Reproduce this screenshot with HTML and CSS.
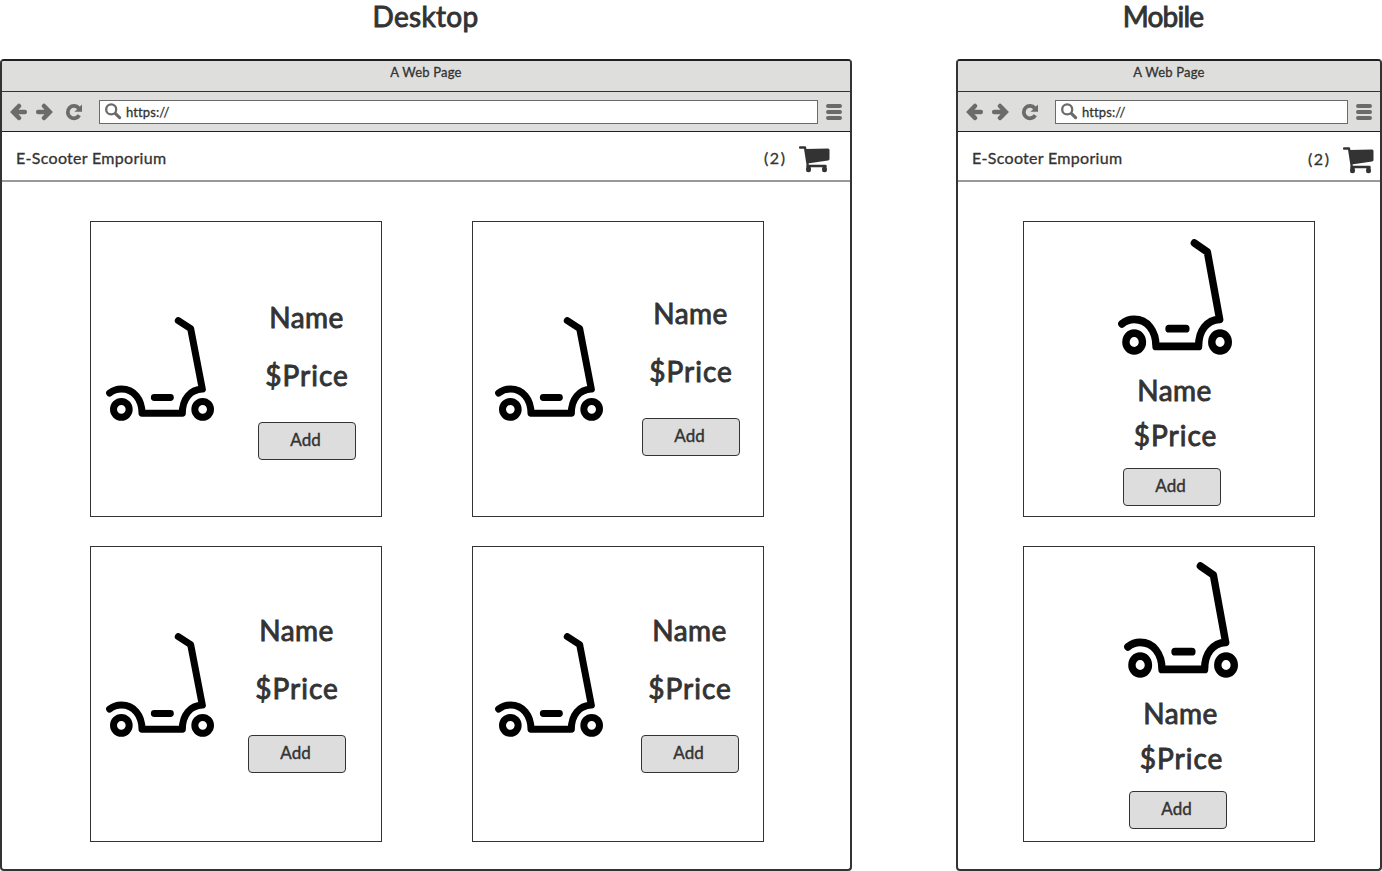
FILE: index.html
```html
<!DOCTYPE html>
<html lang="en">
<head>
<meta charset="utf-8">
<title>E-Scooter Emporium</title>
<link rel="stylesheet" href="styles.css">
</head>
<body>
<svg class="defs" width="0" height="0">
  <symbol id="scooter" viewBox="48 50 324 313" preserveAspectRatio="none">
    <g fill="none" stroke="#000" stroke-width="21" stroke-linecap="round" stroke-linejoin="round">
      <path d="M265 61 302 85 337 267C301 269 277 296 277 340H156C156 298 132 267 94 267C80 267 68 272 59 279M193 292H241"/>
      <ellipse cx="94" cy="328" rx="23.5" ry="24"/>
      <ellipse cx="338" cy="328" rx="23.500" ry="24"/>
    </g>
  </symbol>
  <symbol id="nav" viewBox="0 0 74 18">
    <g fill="none" stroke="#6b6b6b" stroke-width="4.500">
      <path d="M9 3 3.200 9 9 15M3.500 9H14.800M34 3 39.800 9 34 15M39.500 9H28.200" stroke-linecap="round"/>
      <path d="M69.300 12.300A6.200 6.200 0 1 1 68.800 5.200" stroke-width="3.800"/>
    </g>
    <path d="M72 1.500V8.700H64.500Z" fill="#6b6b6b"/>
  </symbol>
  <symbol id="search" viewBox="0 0 17 17">
    <circle cx="6.200" cy="6.400" r="5" fill="none" stroke="#6b6b6b" stroke-width="2.300"/>
    <path d="M10.500 10.700 14.600 14.600" stroke="#6b6b6b" stroke-width="3.200" stroke-linecap="round"/>
  </symbol>
  <symbol id="menu" viewBox="0 0 16 16">
    <path d="M2 2H14M2 8H14M2 14H14" stroke="#6b6b6b" stroke-width="4" stroke-linecap="round"/>
  </symbol>
  <symbol id="cart" viewBox="0 0 31 27">
    <path d="M1 1.500H6L8.700 19.200" fill="none" stroke="#333" stroke-width="2.300" stroke-linecap="round" stroke-linejoin="round"/>
    <path d="M6.500 3 29 2.500Q30.500 2.500 30.500 4V13Q30.500 14.300 29 14.600L8.500 17.500Z" fill="#333"/>
    <path d="M8.500 20H26.500" stroke="#333" stroke-width="2.400" stroke-linecap="round"/>
    <path d="M7.300 20.500H11.700V23H7.300ZM23.400 20.500H27.600V23H23.400Z" fill="#333"/>
    <circle cx="9.500" cy="23.700" r="2.500" fill="#333"/>
    <circle cx="25.500" cy="23.700" r="2.500" fill="#333"/>
  </symbol>
</svg>
<main class="board">
  <section class="view view-desktop">
    <h1 class="heading"><span class="t-desktop">Desktop</span></h1>
    <div class="window">
      <div class="titlebar"><span>A Web Page</span></div>
      <div class="toolbar">
        <svg class="nav"><use href="#nav"/></svg>
        <div class="url"><svg class="search"><use href="#search"/></svg><span>https:<span class="slashes">//</span></span></div>
        <svg class="menu"><use href="#menu"/></svg>
      </div>
      <header class="shop"><span class="brand">E-Scooter Emporium</span><span class="count">(2)</span><svg class="cart"><use href="#cart"/></svg></header>
      <div class="grid">
        <article class="card c1"><svg class="scooter"><use href="#scooter"/></svg><div class="info"><p class="name">Name</p><p class="price">$Price</p><button class="add">Add</button></div></article>
        <article class="card c2"><svg class="scooter"><use href="#scooter"/></svg><div class="info"><p class="name">Name</p><p class="price">$Price</p><button class="add">Add</button></div></article>
        <article class="card c3"><svg class="scooter"><use href="#scooter"/></svg><div class="info"><p class="name">Name</p><p class="price">$Price</p><button class="add">Add</button></div></article>
        <article class="card c4"><svg class="scooter"><use href="#scooter"/></svg><div class="info"><p class="name">Name</p><p class="price">$Price</p><button class="add">Add</button></div></article>
      </div>
    </div>
  </section>
  <section class="view view-mobile">
    <h1 class="heading"><span class="t-mobile">Mobile</span></h1>
    <div class="window">
      <div class="titlebar"><span>A Web Page</span></div>
      <div class="toolbar">
        <svg class="nav"><use href="#nav"/></svg>
        <div class="url"><svg class="search"><use href="#search"/></svg><span>https:<span class="slashes">//</span></span></div>
        <svg class="menu"><use href="#menu"/></svg>
      </div>
      <header class="shop"><span class="brand">E-Scooter Emporium</span><span class="count">(2)</span><svg class="cart"><use href="#cart"/></svg></header>
      <div class="grid">
        <article class="card m1"><svg class="scooter"><use href="#scooter"/></svg><div class="info"><p class="name">Name</p><p class="price">$Price</p><button class="add">Add</button></div></article>
        <article class="card m2"><svg class="scooter"><use href="#scooter"/></svg><div class="info"><p class="name">Name</p><p class="price">$Price</p><button class="add">Add</button></div></article>
      </div>
    </div>
  </section>
</main>
</body>
</html>
```
FILE: styles.css
```css
* { box-sizing: border-box; }
body { margin: 0; background: #fff; color: #333; font-family: Lato, "Open Sans", sans-serif; -webkit-text-stroke: 0.3px #333; }
svg { display: block; flex: none; }
.defs { position: absolute; }
p { margin: 0; }
.board { display: flex; justify-content: space-between; width: 1382px; height: 871px; overflow: hidden; }
.view { display: flex; flex-direction: column; }
.view-desktop { width: 852px; }
.view-mobile { width: 426px; }
.heading { margin: 0; height: 59px; font-size: 28px; line-height: 33px; font-weight: 400; text-align: center; -webkit-text-stroke: 0.9px #333; }
.view-desktop .heading { padding-right: 1px; }
.view-mobile .heading { padding-right: 12px; }
.t-desktop { letter-spacing: 0.3px; }
.t-mobile { letter-spacing: -0.8px; }
.window { height: 812px; border: 2px solid #333; border-top-color: #231f20; border-radius: 4px; overflow: hidden; }
.titlebar { height: 31px; background: #dededc; border-bottom: 1px solid #333; font-size: 13px; line-height: 23px; text-align: center; letter-spacing: 0.2px; }
.toolbar { height: 40px; display: flex; align-items: center; background: #dededc; border-bottom: 1px solid #231f20; padding: 0 8px; }
.nav { width: 74px; height: 18px; }
.url { flex: 1; display: flex; align-items: center; height: 24px; margin: 0 8px 0 15px; padding-left: 5px; background: #fff; border: 1px solid #6b6b6b; font-size: 13px; letter-spacing: 0.1px; }
.slashes { letter-spacing: 1.3px; }
.search { width: 17px; height: 17px; margin-right: 4px; }
.menu { width: 16px; height: 16px; }
.shop { display: flex; height: 50px; padding: 0 20px 0 14px; border-bottom: 2px solid #999; font-size: 16px; }
.brand { flex: 1; line-height: 52px; letter-spacing: 0.3px; }
.count { line-height: 52px; width: 22px; margin-right: 13px; letter-spacing: 1.6px; white-space: nowrap; }
.cart { width: 31px; height: 27px; margin-top: 14px; }
.view-mobile .shop { padding-right: 6px; }
.view-mobile .count { line-height: 54px; }
.view-mobile .cart { margin-top: 15px; }
.grid { display: grid; grid-template-columns: 292px 292px; gap: 29px 90px; padding: 39px 0 0 88px; }
.view-mobile .grid { grid-template-columns: 292px; padding-left: 65px; }
.card { display: flex; align-items: flex-start; height: 296px; border: 1px solid #333; }
.scooter { width: 108px; height: 104px; }
.info { width: 98px; text-align: center; }
.name, .price { font-size: 28px; line-height: 36px; -webkit-text-stroke: 0.9px #333; white-space: nowrap; }
.name { margin-bottom: 22px; padding-right: 1px; letter-spacing: 0.4px; }
.price { margin-bottom: 29px; letter-spacing: 1px; }
.add { display: block; width: 98px; height: 38px; padding: 0 3px 4px 0; border: 1px solid #333; border-radius: 4px; background: #ddd; color: #333; font: 400 17px Lato, "Open Sans", sans-serif; -webkit-text-stroke: 0.4px #333; }
.c1 { padding: 77px 0 0 15px; }
.c1 .scooter { margin-top: 18px; }
.c1 .info { margin-left: 44px; }
.c2 { padding: 73px 0 0 22px; }
.c2 .scooter { margin-top: 22px; }
.c2 .info { margin-left: 39px; }
.c3 { padding: 65px 0 0 15px; }
.c3 .scooter { margin-top: 21px; }
.c3 .info { margin-left: 34px; }
.c4 { padding: 65px 0 0 22px; }
.c4 .scooter { margin-top: 21px; }
.c4 .info { margin-left: 38px; }
.view-mobile .card { flex-direction: column; }
.view-mobile .scooter { width: 114px; height: 116px; margin-bottom: 17px; }
.view-mobile .info { margin-left: 5px; }
.view-mobile .name { margin-bottom: 9px; padding: 0 0 0 5px; }
.view-mobile .price { margin-bottom: 15px; padding-left: 7px; }
.m1 { padding: 17px 0 0 94px; }
.m2 { padding: 15px 0 0 100px; }
```
